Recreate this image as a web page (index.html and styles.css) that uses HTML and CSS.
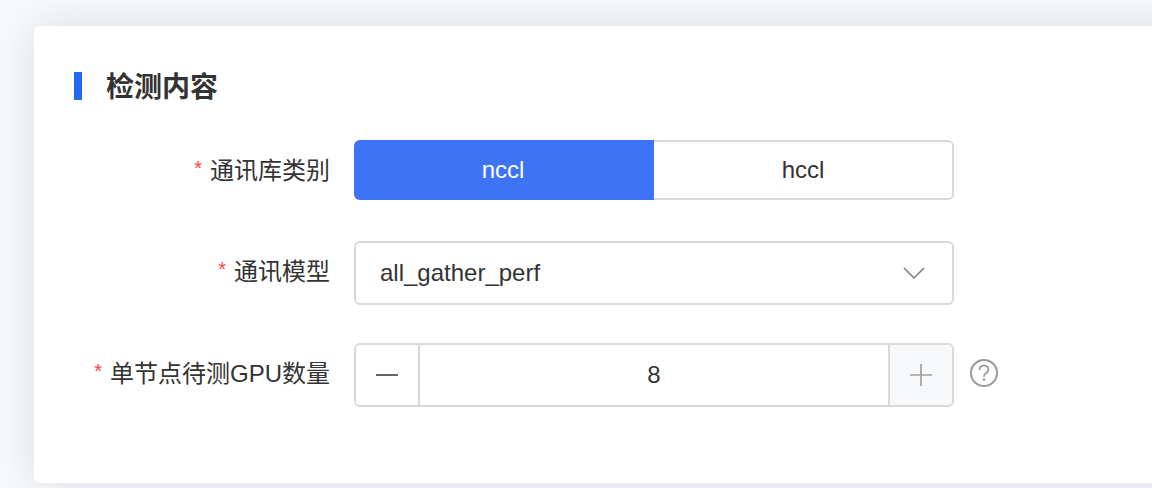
FILE: index.html
```html
<!DOCTYPE html>
<html lang="zh-CN">
<head>
  <meta charset="utf-8">
  <meta name="viewport" content="width=device-width, initial-scale=1">
  <title>检测内容</title>
  <link rel="stylesheet" href="styles.css">
</head>
<body>
  <main class="card">
    <h1 class="title">检测内容</h1>
    <form class="form">
      <span class="label" id="library-label"><span class="required">*</span>通讯库类别</span>
      <div class="segmented" role="radiogroup" aria-labelledby="library-label">
        <label class="segment"><input class="segment-input" type="radio" name="library" value="nccl" checked>nccl</label>
        <label class="segment"><input class="segment-input" type="radio" name="library" value="hccl">hccl</label>
      </div>

      <label class="label" for="model"><span class="required">*</span>通讯模型</label>
      <div class="select-box">
        <select class="select" id="model">
          <option>all_gather_perf</option>
        </select>
        <svg class="chevron" width="22" height="14" viewBox="0 0 22 14" fill="none" stroke="currentColor" stroke-width="1.5" aria-hidden="true"><path d="M1 2l10 10L21 2"/></svg>
      </div>

      <label class="label" for="count"><span class="required">*</span>单节点待测GPU数量</label>
      <div class="count-row">
        <div class="stepper">
          <button class="step" type="button" aria-label="减少">
            <svg width="24" height="24" viewBox="0 0 24 24" stroke="currentColor" stroke-width="2"><path d="M1 12h22"/></svg>
          </button>
          <input class="count" id="count" type="text" inputmode="numeric" value="8">
          <button class="step step-disabled" type="button" aria-label="增加" disabled>
            <svg width="24" height="24" viewBox="0 0 24 24" stroke="currentColor" stroke-width="1.7"><path d="M1 12h22M12 1v22"/></svg>
          </button>
        </div>
        <button class="help" type="button" aria-label="帮助">
          <svg width="28" height="28" viewBox="0 0 28 28" fill="none" stroke="currentColor" stroke-width="2" aria-hidden="true">
            <circle cx="14" cy="14" r="13"/>
            <path d="M9.500 11c0-2.700 1.900-4.300 4.500-4.300s4.500 1.600 4.500 4c0 3.300-4.500 3.200-4.500 6.500v.6" stroke-width="1.700"/>
            <circle cx="14" cy="20.500" r="1.200" fill="currentColor" stroke="none"/>
          </svg>
        </button>
      </div>
    </form>
  </main>
</body>
</html>
```

FILE: styles.css
```css
* {
  box-sizing: border-box;
}

body {
  margin: 0;
  padding: 26px 0 5px 34px;
  overflow: hidden;
  background: #f8f9fb;
  color: #333;
  font: 24px/32px "Liberation Sans", "Noto Sans CJK SC", sans-serif;
}

/* The card runs past the right edge of the window. */
.card {
  margin-right: -48px;
  padding: 40px 88px 76px 40px;
  border-radius: 6px;
  background: #fff;
  box-shadow: 0 0 40px rgba(30, 30, 80, 0.13);
}

.title {
  display: flex;
  align-items: flex-start;
  gap: 24px;
  margin: 0 0 30px;
  font-size: 28px;
  line-height: 44px;
  font-weight: 700;
}

.title::before {
  content: "";
  width: 8px;
  height: 28px;
  margin-top: 6px;
  background: #2468f2;
}

.form {
  display: grid;
  grid-template-columns: 256px minmax(0, 1fr);
  column-gap: 24px;
  row-gap: 38px;
}

.label {
  display: flex;
  justify-content: flex-end;
  gap: 8px;
  line-height: 62px;
}

.required {
  color: #f44;
  font-size: 20px;
  line-height: 56px;
}

.segmented,
.select-box,
.stepper {
  display: flex;
  width: 100%;
  max-width: 600px;
}

.segmented {
  height: 63px;
  padding-bottom: 3px;
}

.segment {
  flex: 1;
  display: flex;
  align-items: center;
  justify-content: center;
  border: 2px solid #d9d9d9;
  border-left: 0;
  border-radius: 0 6px 6px 0;
  cursor: pointer;
}

.segment:first-child {
  border-radius: 6px 0 0 6px;
}

.segment:has(:checked) {
  border-color: #3d74f6;
  background: #3d74f6;
  color: #fff;
}

.segment-input {
  appearance: none;
  width: 0;
  height: 0;
  margin: 0;
}

.select-box {
  display: grid;
  align-items: center;
}

.select {
  grid-area: 1 / 1;
  appearance: none;
  width: 100%;
  height: 64px;
  padding: 0 64px 0 24px;
  border: 2px solid #d9d9d9;
  border-radius: 6px;
  background: #fff;
  color: inherit;
  font: inherit;
}

.chevron {
  grid-area: 1 / 1;
  justify-self: end;
  margin-right: 29px;
  color: #777985;
  pointer-events: none;
}

.count-row {
  display: flex;
  align-items: center;
  gap: 16px;
}

.stepper {
  height: 64px;
  border: 2px solid #d9d9d9;
  border-radius: 6px;
  overflow: hidden;
}

.step {
  display: flex;
  flex: none;
  align-items: center;
  justify-content: center;
  width: 62px;
  padding: 0;
  border: 0;
  background: #fff;
  color: #666;
}

.step-disabled {
  background: #f7f8fa;
  color: #a0a0a0;
}

.count {
  flex: 1;
  min-width: 0;
  padding: 0;
  border: solid #d9d9d9;
  border-width: 0 2px;
  background: #fff;
  color: inherit;
  font: inherit;
  text-align: center;
}

.help {
  display: flex;
  flex: none;
  padding: 0 0 4px;
  border: 0;
  background: none;
  color: #999;
}
```
